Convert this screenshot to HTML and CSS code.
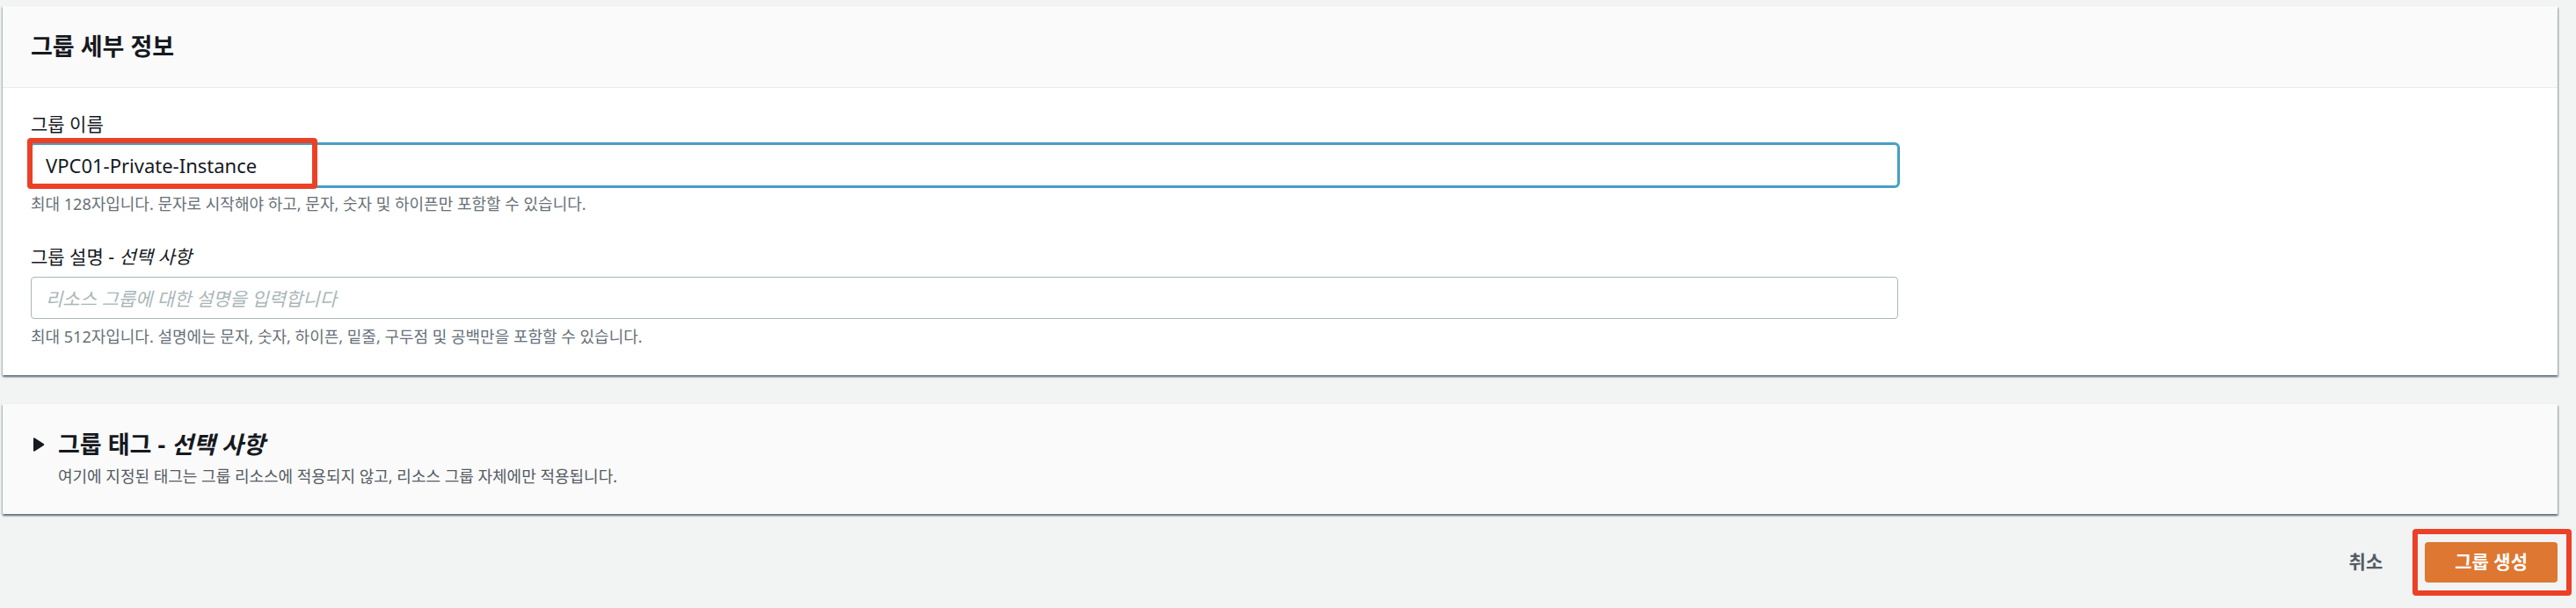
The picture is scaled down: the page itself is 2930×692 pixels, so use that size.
FILE: index.html
```html
<!DOCTYPE html>
<html lang="ko">
<head>
<meta charset="utf-8">
<title>그룹 생성</title>
<link rel="stylesheet" href="styles.css">
</head>
<body>
<form class="page">
  <section class="panel">
    <header class="panel-header"><h2 class="title">그룹 세부 정보</h2></header>
    <div class="panel-body">
      <div class="field">
        <label class="label" for="name">그룹 이름</label>
        <div class="control">
          <input class="input input-active" id="name" type="text" value="VPC01-Private-Instance" aria-describedby="name-hint">
          <span class="mark mark-name"></span>
        </div>
        <p class="hint" id="name-hint">최대 128자입니다. 문자로 시작해야 하고, 문자, 숫자 및 하이픈만 포함할 수 있습니다.</p>
      </div>
      <div class="field">
        <label class="label" for="desc">그룹 설명 - <em>선택 사항</em></label>
        <div class="control">
          <input class="input" id="desc" type="text" placeholder="리소스 그룹에 대한 설명을 입력합니다" aria-describedby="desc-hint">
        </div>
        <p class="hint" id="desc-hint">최대 512자입니다. 설명에는 문자, 숫자, 하이픈, 밑줄, 구두점 및 공백만을 포함할 수 있습니다.</p>
      </div>
    </div>
  </section>
  <section class="panel tags">
    <button class="toggle" type="button" aria-expanded="false" aria-label="그룹 태그 펼치기">
      <svg class="caret" viewBox="0 0 14 18" aria-hidden="true"><path d="M1 2.2Q1 .6 2.5 1.4L12.6 8Q13.8 9 12.6 10L2.5 16.6Q1 17.4 1 15.8Z" fill="currentColor"/></svg>
    </button>
    <div class="tags-text">
      <h2 class="title">그룹 태그 - <em>선택 사항</em></h2>
      <p class="description">여기에 지정된 태그는 그룹 리소스에 적용되지 않고, 리소스 그룹 자체에만 적용됩니다.</p>
    </div>
  </section>
  <div class="actions">
    <button class="button button-link" type="button">취소</button>
    <div class="primary-wrap">
      <button class="button button-primary" type="submit">그룹 생성</button>
      <span class="mark mark-submit"></span>
    </div>
  </div>
</form>
</body>
</html>
```
FILE: styles.css
```css
* { box-sizing: border-box; }
body {
  margin: 0;
  background: #f2f3f3;
  color: #16191f;
  font-family: "Noto Sans", "Noto Sans CJK KR", sans-serif;
  font-size: 21px;
}
h2, p { margin: 0; }
.page { padding: 7px 21px 16px 3px; }
.panel {
  background: #fff;
  box-shadow: 0 2px 2px rgba(0, 28, 36, .35), 1px 2px 2px rgba(0, 28, 36, .3), -1px 1px 2px rgba(0, 28, 36, .2);
}
.panel-header {
  padding: 28px 32px;
  background: #fafafa;
  border-bottom: 1px solid #eaeded;
}
.title { font-size: 27px; font-weight: 700; line-height: 36px; }
.panel-body {
  display: flex;
  flex-direction: column;
  gap: 35px;
  padding: 28px 32px 32px;
}
.field { width: calc(75% - 8px); }
.label { display: block; line-height: 26px; margin-bottom: 10px; }
.control { position: relative; }
.input {
  display: block;
  width: 100%;
  height: 48px;
  padding: 0 16px;
  border: 1px solid #aab7b8;
  border-radius: 4px;
  background: #fff;
  color: #16191f;
  font: inherit;
  font-size: 22px;
  outline: 0;
}
.input::placeholder { color: #aab7b8; font-size: 21px; font-style: italic; opacity: 1; }
.input-active { border-color: #469fc5; box-shadow: 0 0 0 2px #469fc5; }
.hint { margin-top: 8px; color: #687078; font-size: 18px; line-height: 24px; }
.mark { position: absolute; border: 6px solid #ec4027; border-radius: 4px; pointer-events: none; }
.mark-name { left: -4px; top: -7px; bottom: -3px; width: 330px; }
.mark-submit { inset: -15px -16px -15px -14px; }
.tags {
  display: flex;
  gap: 11px;
  margin-top: 33px;
  padding: 28px 32px 31px;
  background: #fafafa;
}
.toggle { display: flex; align-items: center; width: 20px; height: 36px; padding: 0 2px; border: 0; background: none; color: #16191f; }
.caret { width: 14px; height: 18px; }
.description { color: #545b64; font-size: 18px; line-height: 24px; margin-top: 6px; }
.actions {
  display: flex;
  justify-content: flex-end;
  align-items: center;
  gap: 8px;
  margin-top: 32px;
}
.primary-wrap { position: relative; }
.button {
  height: 46px;
  padding: 0 34px 4px;
  border: 0;
  border-radius: 4px;
  font: inherit;
  font-weight: 700;
}
.button-link { padding: 0 40px 4px; background: transparent; color: #545b64; }
.button-primary { background: #dd7731; color: #fff; }
```
